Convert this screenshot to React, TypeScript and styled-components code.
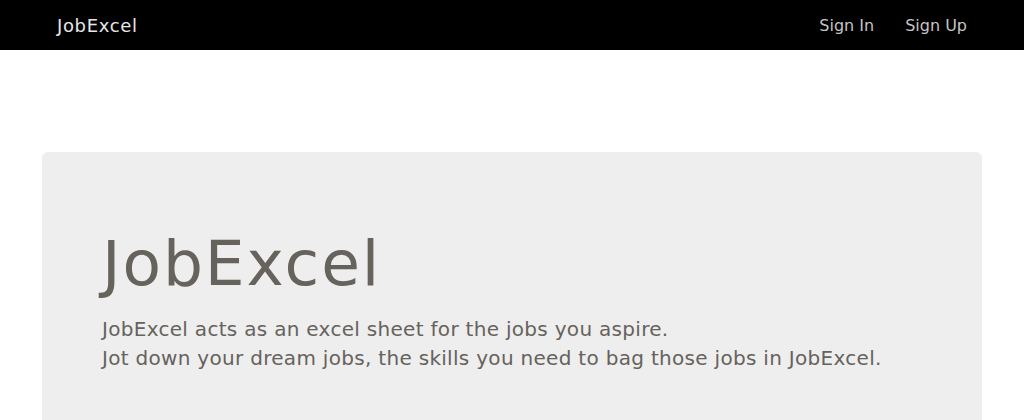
import React from "react";
import styled, { createGlobalStyle } from "styled-components";

const Global = createGlobalStyle`
  html, body { margin: 0; padding: 0; background: #ffffff; }
  body { font-family: "DejaVu Sans", "Liberation Sans", sans-serif; }
  * { box-sizing: border-box; }
`;

const NavBar = styled.nav`
  height: 50px;
  background: #000000;
  display: flex;
  align-items: center;
  justify-content: space-between;
  padding: 0 57px;
`;

const Brand = styled.a`
  color: #e6e6e6;
  font-size: 18px;
  letter-spacing: 0.65px;
  text-decoration: none;
`;

const NavLinks = styled.div`
  display: flex;
  gap: 31px;
`;

const NavLink = styled.a`
  color: #c4c4c4;
  font-size: 16px;
  letter-spacing: 0;
  text-decoration: none;
`;

const Main = styled.main`
  padding: 102px 42px 0;
`;

const Jumbotron = styled.section`
  background: #eeeeee;
  border-radius: 6px;
  padding: 74px 60px 64px;
  min-height: 300px;
`;

const Title = styled.h1`
  margin: 0;
  font-size: 63px;
  font-weight: 400;
  line-height: 1.2;
  letter-spacing: 1.9px;
  color: #66625c;
`;

const Lead = styled.p`
  margin: 13px 0 0;
  font-size: 20px;
  line-height: 29px;
  letter-spacing: 0.3px;
  color: #66625c;
`;

export default function App() {
  return (
    <>
      <Global />
      <NavBar>
        <Brand href="#">JobExcel</Brand>
        <NavLinks>
          <NavLink href="#">Sign In</NavLink>
          <NavLink href="#">Sign Up</NavLink>
        </NavLinks>
      </NavBar>
      <Main>
        <Jumbotron>
          <Title>JobExcel</Title>
          <Lead>
            JobExcel acts as an excel sheet for the jobs you aspire.
            <br />
            Jot down your dream jobs, the skills you need to bag those jobs in JobExcel.
          </Lead>
        </Jumbotron>
      </Main>
    </>
  );
}
